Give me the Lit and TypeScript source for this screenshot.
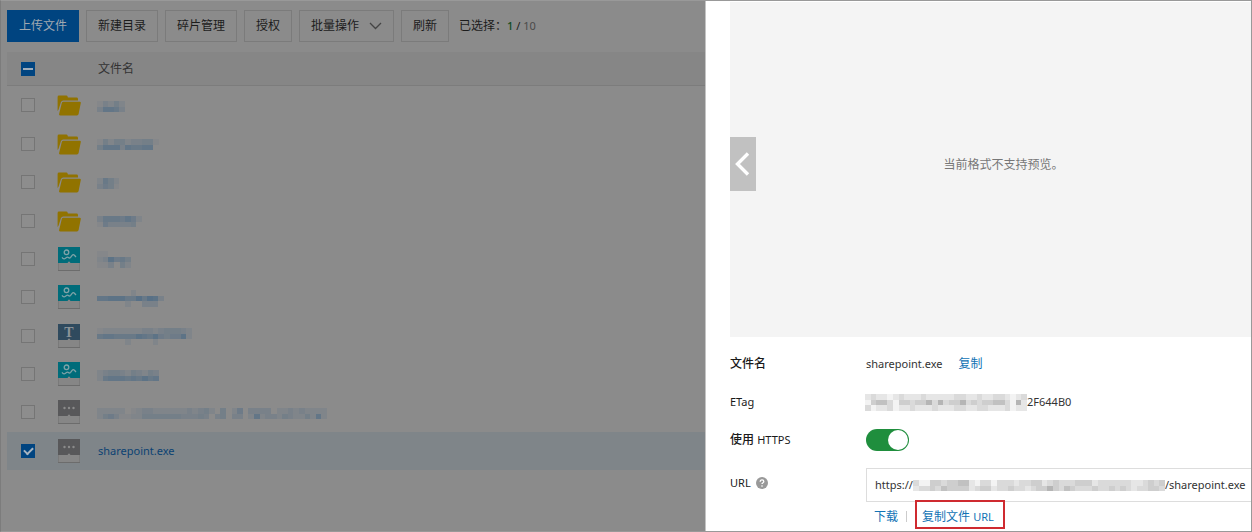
import { LitElement, html, svg, css } from "lit";
import { customElement, property } from "lit/decorators.js";

/** Pixelated placeholder for a masked piece of text; each digit is a shade. */
@customElement("masked-text")
class MaskedText extends LitElement {
  @property() rows = "";

  static styles = css`
    :host { display: inline-block; vertical-align: middle; line-height: 0; }
    svg { display: block; fill: currentColor; }
  `;

  render() {
    const lines = this.rows.split("/");
    const cols = Math.max(...lines.map((l) => l.length));
    const cell = 5.6;
    return html`<svg aria-hidden="true" shape-rendering="crispEdges"
      width=${Math.round(cols * cell)} height=${Math.round(lines.length * cell)}
      viewBox="0 0 ${cols} ${lines.length}" preserveAspectRatio="none">
      ${lines.map((line, y) => [...line].map((d, x) => d === "0" ? null
        : svg`<rect x=${x} y=${y} width="1" height="1" fill-opacity=${Number(d) / 9}></rect>`))}
    </svg>`;
  }
}

type Kind = "folder" | "image" | "text" | "other";

@customElement("file-icon")
class FileIcon extends LitElement {
  @property() kind: Kind = "other";

  static styles = css`
    :host { display: block; }
    svg { display: block; }
    .type { font: bold 14px "Liberation Serif", serif; }
  `;

  render() {
    if (this.kind === "folder") {
      return html`<svg width="24" height="24" viewBox="0 0 24 24" aria-hidden="true">
        <path fill="#917300" d="M.6 4q0-1.400 1.400-1.400h7.300q1 0 1.300 1l.3 1h8.700q1.400 0 1.400 1.400v1.500H6.300q-1.800 0-2.400 1.700L1.600 16.500.6 18z"/>
        <path fill="#917300" d="M6.400 8.700H22.600q1.500 0 1.200 1.400l-2.200 11q-.3 1.400-1.700 1.400H3.500q-1.800 0-1.400-1.500L4.800 9.900q.3-1.200 1.600-1.200z"/>
      </svg>`;
    }
    const fill = { image: "#006c7a", text: "#2f4a5e", other: "#58585a" }[this.kind];
    return html`<svg width="24" height="24" viewBox="0 0 24 24" aria-hidden="true">
      <rect x="1.500" y=".5" width="21" height="23" fill="#868686" stroke="#7a7a7a"/>
      <path d="M1 23.500h22" stroke="#6c6c6c"/>
      <rect x="1" width="22" height="16" fill=${fill}/>
      <path d="M10.500 16l1.500-1.700 1.500 1.700z" fill="#8a8a8a"/>
      ${this.kind === "image" ? svg`<g fill="none" stroke="#7fa3a8" stroke-width="1.300">
          <circle cx="9.500" cy="5.300" r="2.300"/>
          <path d="M5 10.300q2 3 4.200.4 1.400-1.200 2.400 0 1 .8 2-.4l1.500-1.900q1.200-1.300 2.300-.1L19 10"/>
        </g>` : null}
      ${this.kind === "text" ? svg`<text class="type" x="12" y="13" text-anchor="middle" fill="#8b9398">T</text>` : null}
      ${this.kind === "other" ? svg`<g fill="#8b8b8b"><circle cx="7.500" cy="8" r="1.200"/><circle cx="12" cy="8" r="1.200"/><circle cx="16.500" cy="8" r="1.200"/></g>` : null}
    </svg>`;
  }
}

interface FileRow { kind: Kind; mask?: string; name?: string; selected?: boolean; }

const FILES: FileRow[] = [
  { kind: "folder", mask: "13242/37763" },
  { kind: "folder", mask: "14244233441/4777376677" },
  { kind: "folder", mask: "2642/3541" },
  { kind: "folder", mask: "36665752/1533334" },
  { kind: "image", mask: "110000/238564/113042" },
  { kind: "image", mask: "000000200000/778886696983/000002003330" },
  { kind: "text", mask: "12222222332344432/67766668768545582/00000200002000000" },
  { kind: "image", mask: "23443243243/26777676867" },
  { kind: "other", mask: "22222012332222223234204025033330223232222/24531122444444433343034033027233243224272" },
  { kind: "other", name: "sharepoint.exe", selected: true },
];

@customElement("file-list")
class FileList extends LitElement {
  static styles = css`
    :host { display: block; padding: 9px 0 0 6px; color: #1c1c1c; }
    .toolbar { display: flex; align-items: center; gap: 7px; margin-bottom: 10px; }
    button {
      height: 32px; padding: 0 11px; display: flex; align-items: center; gap: 10px;
      font: inherit; color: inherit; background: #8b8b8b; border: 1px solid #7b7b7b; border-radius: 0;
      white-space: nowrap;
    }
    .primary { background: #004480; border-color: #004480; color: #a0a8b0; }
    .count { margin-left: 3px; white-space: nowrap; }
    .num { font-size: 11px; }
    .chosen { color: #0b4a1c; font-weight: 500; }
    .total { color: #4a4a4a; }
    table { width: 100%; height: 418px; border-collapse: collapse; table-layout: fixed; }
    th { height: 33px; padding: 0; background: #868686; border-bottom: 1px solid #7c7c7c; font-weight: 400; text-align: left; color: #333; }
    td { padding: 0; vertical-align: middle; }
    .pick { width: 50px; }
    .icon { width: 41px; }
    .pick input { margin: 0 0 0 14px; }
    td a { color: #0b4273; text-decoration: none; font-size: 11px; }
    masked-text { color: #587086; margin-left: -1px; }
    .selected { background: #7f8589; }
    input {
      appearance: none; display: block; position: relative; width: 14px; height: 14px;
      background: #8d8d8d; border: 1px solid #757575;
    }
    input:checked, input:indeterminate { background: #004480; border-color: #004480; }
    input:checked::after {
      content: ""; position: absolute; left: 2px; top: 2px; width: 7px; height: 4px;
      border: solid #a8b4c0; border-width: 0 0 2px 2px; transform: rotate(-45deg);
    }
    input:indeterminate::after {
      content: ""; position: absolute; left: 1px; top: 5px; width: 10px; height: 2px; background: #a0acb8;
    }
  `;

  render() {
    return html`
      <div class="toolbar">
        <button class="primary">上传文件</button>
        <button>新建目录</button>
        <button>碎片管理</button>
        <button>授权</button>
        <button>批量操作
          <svg width="13" height="8" viewBox="0 0 13 8" fill="none" stroke="#444" stroke-width="1.300" aria-hidden="true"><path d="M1 1l5.500 5.500L12 1"/></svg>
        </button>
        <button>刷新</button>
        <span class="count">已选择：<span class="num"><span class="chosen">1</span> / <span class="total">10</span></span></span>
      </div>
      <table>
        <thead><tr>
          <th class="pick"><input type="checkbox" aria-label="全选" .indeterminate=${true}></th>
          <th class="icon"></th>
          <th>文件名</th>
        </tr></thead>
        <tbody>
          ${FILES.map((f) => html`<tr class=${f.selected ? "selected" : ""}>
            <td class="pick"><input type="checkbox" aria-label="选择" .checked=${!!f.selected}></td>
            <td class="icon"><file-icon .kind=${f.kind}></file-icon></td>
            <td><a href="#">${f.name ?? html`<masked-text .rows=${f.mask}></masked-text>`}</a></td>
          </tr>`)}
        </tbody>
      </table>`;
  }
}

@customElement("file-detail")
class FileDetail extends LitElement {
  static styles = css`
    :host { display: flex; flex-direction: column; padding: 1px 0 0 24px; background: #fff; color: #333; border-left: 1px solid #c4c4c4; }
    .preview { height: 335px; display: flex; align-items: center; background: #f4f4f4; }
    .preview p { flex: 1; margin: 0; padding-bottom: 9px; text-align: center; color: #777; }
    .prev { width: 26px; height: 54px; margin-bottom: 11px; padding: 0; border: 0; background: #c1c1c1; display: grid; place-items: center; }
    .fields { padding-top: 8px; }
    .field { display: grid; grid-template-columns: 136px minmax(0, 1fr); align-items: center; min-height: 38px; }
    .label { display: flex; align-items: center; gap: 5px; color: #1a1a1a; white-space: pre; }
    .strong { font-weight: 500; }
    .latin { font-size: 11px; }
    .value { display: flex; align-items: center; }
    a { color: #1273b5; text-decoration: none; }
    .copy { margin-left: 16px; }
    masked-text { color: #909090; flex: none; }
    .value masked-text { margin-left: -1px; }
    .switch { appearance: none; margin: 0; width: 43px; height: 22px; border-radius: 11px; background: #1f8e3d; display: flex; justify-content: flex-end; align-items: center; padding: 1px; box-sizing: border-box; }
    .switch::after { content: ""; width: 20px; height: 20px; border-radius: 50%; background: #fff; }
    .url { align-items: start; padding-top: 9px; min-height: 0; }
    .url .label { height: 30px; }
    .box { display: flex; align-items: center; height: 34px; box-sizing: border-box; border: 1px solid #ddd; border-right: 0; padding-left: 8px; font-size: 11px; }
    .box input { flex: 1; min-width: 0; padding: 0; border: 0; outline: 0; background: none; font: inherit; color: inherit; }
    .links { display: flex; align-items: center; margin-top: -2px; padding-left: 8px; }
    .links > a { padding-top: 4px; }
    .bar { width: 1px; height: 11px; margin: 4px 8px 0; background: #ccc; }
    .links .marked { box-sizing: border-box; height: 29px; padding: 5px 9px 0 5px; border: 2px solid #cf2a30; line-height: 20px; }
  `;

  render() {
    return html`
      <div class="preview">
        <button class="prev" aria-label="上一个">
          <svg width="16" height="24" viewBox="0 0 16 24" fill="none" stroke="#fff" stroke-width="3.400" aria-hidden="true"><path d="M13 1.500L2.500 12 13 22.500"/></svg>
        </button>
        <p>当前格式不支持预览。</p>
      </div>
      <div class="fields">
        <div class="field">
          <span class="label strong">文件名</span>
          <span class="value"><span class="latin">sharepoint.exe</span><a class="copy" href="#">复制</a></span>
        </div>
        <div class="field">
          <span class="label latin">ETag</span>
          <span class="value latin"><masked-text .rows=${"23221232223222223322322332123/14553144344636344634344553162/31223122322232223322332223122"}></masked-text>2F644B0</span>
        </div>
        <div class="field">
          <label class="label" for="https"><span><span class="strong">使用</span> <span class="latin">HTTPS</span></span></label>
          <input class="switch" id="https" type="checkbox" role="switch" checked>
        </div>
        <div class="field url">
          <label class="label latin" for="url">URL<svg width="12" height="12" viewBox="0 0 12 12" aria-hidden="true"><circle cx="6" cy="6" r="6" fill="#999"/><path d="M4.200 4.700q0-1.800 1.800-1.800t1.800 1.600q0 .8-.9 1.300-.9.400-.9 1.300" fill="none" stroke="#fff" stroke-width="1.300"/><circle cx="6" cy="9" r=".8" fill="#fff"/></svg></label>
          <div>
            <div class="box">https://<masked-text .rows=${"311443445521331333233442343334442333333223434/233435444423442334332344643543334334343233443"}></masked-text><input id="url" readonly value="/sharepoint.exe"></div>
            <div class="links">
              <a href="#">下载</a><span class="bar"></span><a class="marked" href="#">复制文件 <span class="latin">URL</span></a>
            </div>
          </div>
        </div>
      </div>`;
  }
}

@customElement("app-root")
class AppRoot extends LitElement {
  static styles = css`
    :host {
      display: flex; box-sizing: border-box; min-height: 100vh; background: #8b8b8b;
      border: 1px solid #999; border-left-color: #7c7c7c;
      font: 12px/18px "Noto Sans", "Noto Sans CJK SC", sans-serif;
    }
    file-list { flex: 1; min-width: 0; }
    file-detail { flex: 0 0 546px; min-width: 0; box-sizing: border-box; }
  `;

  render() {
    return html`<file-list></file-list><file-detail></file-detail>`;
  }
}
